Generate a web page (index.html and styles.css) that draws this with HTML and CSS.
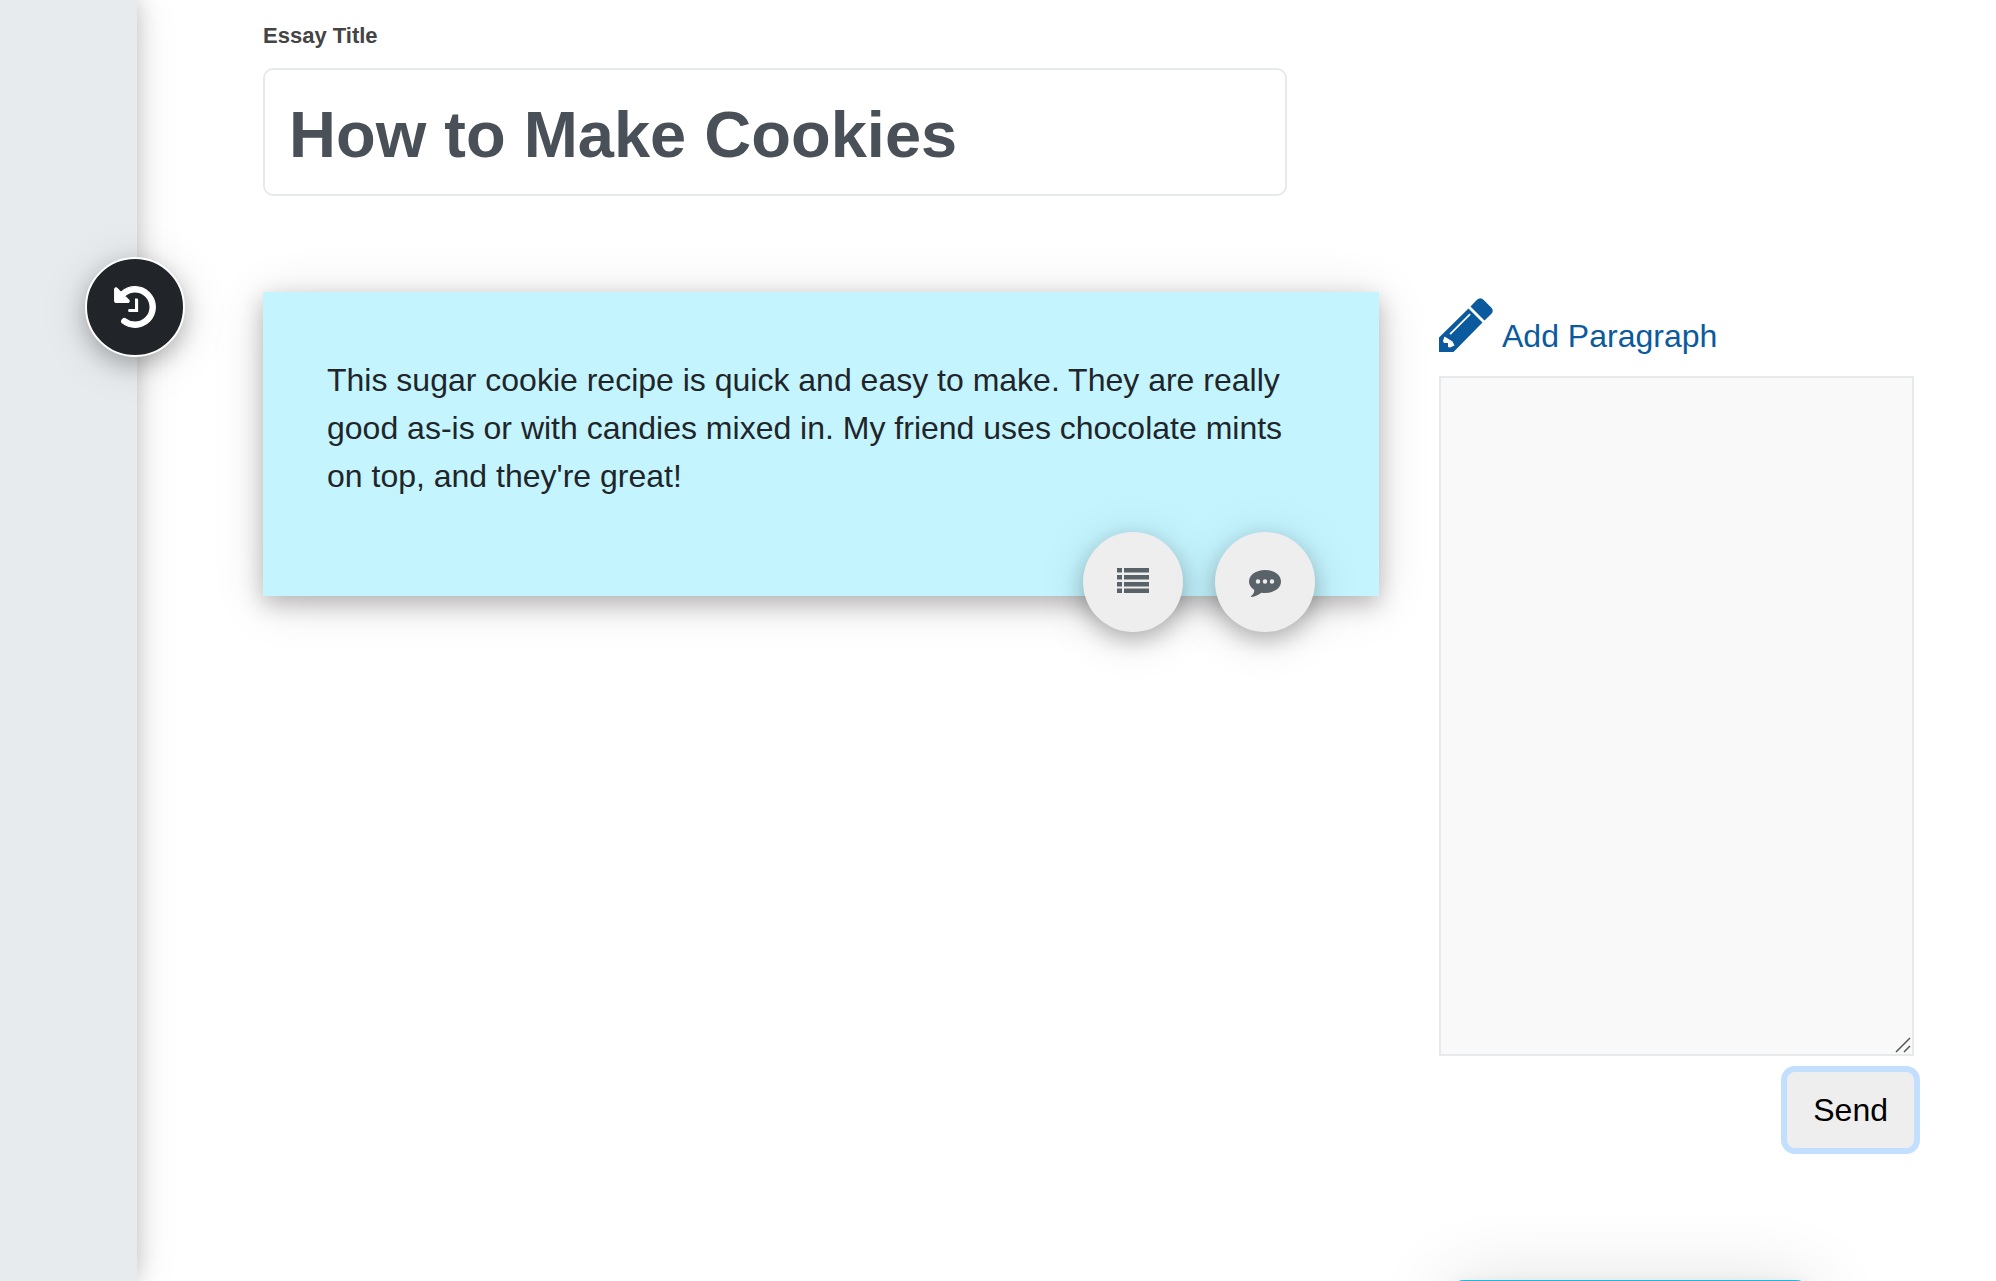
FILE: index.html
```html
<!DOCTYPE html>
<html lang="en">
<head>
<meta charset="utf-8">
<title>How to Make Cookies</title>
<link rel="stylesheet" href="styles.css">
</head>
<body>
<div class="app">
  <aside class="rail">
    <button class="round history" type="button" aria-label="History">
      <svg viewBox="0 0 512 512" width="42" height="42" fill="currentColor" aria-hidden="true"><path d="M504 255.531c.253 136.640-111.180 248.372-247.820 248.468-59.015.042-113.223-20.530-155.822-54.911-11.077-8.940-11.905-25.541-1.839-35.607l11.267-11.267c8.609-8.609 22.353-9.551 31.891-1.984C173.062 425.135 212.781 440 256 440c101.705 0 184-82.311 184-184 0-101.705-82.311-184-184-184-48.814 0-93.149 18.969-126.068 49.932l50.754 50.754c10.080 10.080 2.941 27.314-11.313 27.314H24c-8.837 0-16-7.163-16-16V38.627c0-14.254 17.234-21.393 27.314-11.314l49.372 49.372C129.209 34.136 189.552 8 256 8c136.810 0 247.747 110.780 248 247.531z" stroke="currentColor" stroke-width="14"/><path d="M256 152h22a16 16 0 0 1 16 16v150h-110a10 10 0 0 1-10-10v-18a10 10 0 0 1 10-10h72z"/></svg>
    </button>
  </aside>
  <main class="main">
    <div class="field">
      <label class="field-label" for="title">Essay Title</label>
      <input class="title-input" id="title" type="text" value="How to Make Cookies">
    </div>
    <div class="columns">
      <section class="card">
        <p class="card-text">This sugar cookie recipe is quick and easy to make. They are really good as-is or with candies mixed in. My friend uses chocolate mints on top, and they're great!</p>
        <div class="card-actions">
          <button class="round action" type="button" aria-label="List">
            <svg viewBox="0 0 32 28" width="32" height="28" fill="currentColor" aria-hidden="true"><path d="M0 0h5v4.500H0zM7 0h25v4.500H7zM0 7h5v4.500H0zM7 7h25v4.500H7zM0 14h5v4.500H0zM7 14h25v4.500H7zM0 20.500h5V25H0zM7 20.500h25V25H7z"/></svg>
          </button>
          <button class="round action" type="button" aria-label="Comment">
            <svg viewBox="0 0 32 32" width="32" height="32" fill="currentColor" aria-hidden="true"><path fill-rule="evenodd" d="M16 4c9 0 16 5 16 11.500S25 27 16 27c-1.300 0-2.500-.1-3.700-.3C9.500 29 6 30.600 2.500 31c-.8 0-.7-.5-.2-1C4 28.500 5.300 27 5.300 24 2 22 0 19 0 15.500 0 9 7 4 16 4zM9 13.300a2.200 2.200 0 1 0 0 4.400 2.200 2.200 0 0 0 0-4.400zm7 0a2.200 2.200 0 1 0 0 4.400 2.200 2.200 0 0 0 0-4.400zm7 0a2.200 2.200 0 1 0 0 4.400 2.200 2.200 0 0 0 0-4.400z"/></svg>
          </button>
        </div>
      </section>
      <form class="composer">
        <label class="composer-label" for="paragraph">
          <svg viewBox="0 0 54 54" width="54" height="54" fill="currentColor" aria-hidden="true"><path d="M38 1.800c2-2 4.500-2 6.500 0l7.700 7.700c2 2 2 4.500 0 6.500L45.500 22.500 31.500 8.500z"/><path fill-rule="evenodd" d="M29.500 10.500l14 14L14.500 54H0V39.500zM30.500 15.500L10.500 35.500l1.200 1.200 20-20zM5.500 38.500L4 43l1 2h4v4l2 .5 4.500-2L13.500 43.500z"/></svg>
          <span>Add Paragraph</span>
        </label>
        <div class="composer-box">
          <textarea class="composer-text" id="paragraph"></textarea>
          <svg class="grip" viewBox="0 0 16 16" width="16" height="16" fill="none" stroke="#555" stroke-width="1.500" aria-hidden="true"><path d="M1 15L15 1M9 15l6-6"/></svg>
        </div>
        <button class="send" type="button">Send</button>
      </form>
    </div>
  </main>
  <div class="drawer"></div>
</div>
</body>
</html>
```
FILE: styles.css
```css
* { box-sizing: border-box; }
body { margin: 0; background: #fff; color: #212529; font: 32px/48px "Liberation Sans", Arial, sans-serif; }
button, input, textarea { font: inherit; }
.app { display: flex; height: 100vh; overflow: hidden; }
.rail { position: relative; flex: none; width: 137px; background: #e7ebee; box-shadow: 0 0 22px rgba(0,0,0,.22), 0 0 50px rgba(0,0,0,.08); }
.round { display: flex; align-items: center; justify-content: center; width: 100px; height: 100px; padding: 0; border: 0; border-radius: 50%; box-shadow: 0 8px 22px rgba(0,0,0,.24), 0 6px 50px rgba(0,0,0,.12); }
.history { position: absolute; top: 257px; right: -48px; border: 2px solid #fff; background: #212529; color: #fff; }
.main { flex: 1; min-width: 0; padding: 20px 82px 0 126px; }
.field { display: flex; flex-direction: column; gap: 16px; max-width: 1024px; }
.field-label { font-size: 22px; font-weight: 700; line-height: 32px; color: #444; }
.title-input { width: 100%; height: 128px; padding: 4px 24px 0; border: 2px solid #e6eaed; border-radius: 10px; background: #fff; color: #495057; font-size: 65px; font-weight: 700; }
.columns { display: grid; grid-template-columns: minmax(0, 1fr) 475px; gap: 60px; align-items: start; margin-top: 96px; }
.card { padding: 64px 64px 0; background: #c4f5ff; box-shadow: 0 8px 22px rgba(0,0,0,.24), 0 6px 50px rgba(0,0,0,.12); }
.card-text { margin: 0; }
.card-actions { display: flex; justify-content: flex-end; gap: 32px; margin: 32px 0 -36px; }
.action { background: #eee; color: #5a6269; }
.composer { display: flex; flex-direction: column; }
.composer-label { display: flex; align-items: flex-end; gap: 9px; padding-top: 6px; color: #0b5a9d; }
.composer-label span { line-height: 32px; }
.composer-box { position: relative; margin-top: 24px; }
.composer-text { display: block; width: 100%; height: 680px; padding: 16px; border: 2px solid #e6eaed; border-radius: 0; background: #f9f9f9; color: #212529; resize: none; }
.grip { position: absolute; right: 3px; bottom: 3px; }
.send { align-self: flex-end; margin-top: 16px; padding: 14px 26px; border: 0; border-radius: 8px; background: #eee; color: #000; box-shadow: 0 0 0 6px #c3dfff; }
.drawer { position: fixed; right: 184px; bottom: -63px; width: 364px; height: 64px; border-radius: 16px; background: #20b8dc; box-shadow: 0 8px 22px rgba(0,0,0,.12), 0 6px 80px rgba(0,0,0,.14); }
```
